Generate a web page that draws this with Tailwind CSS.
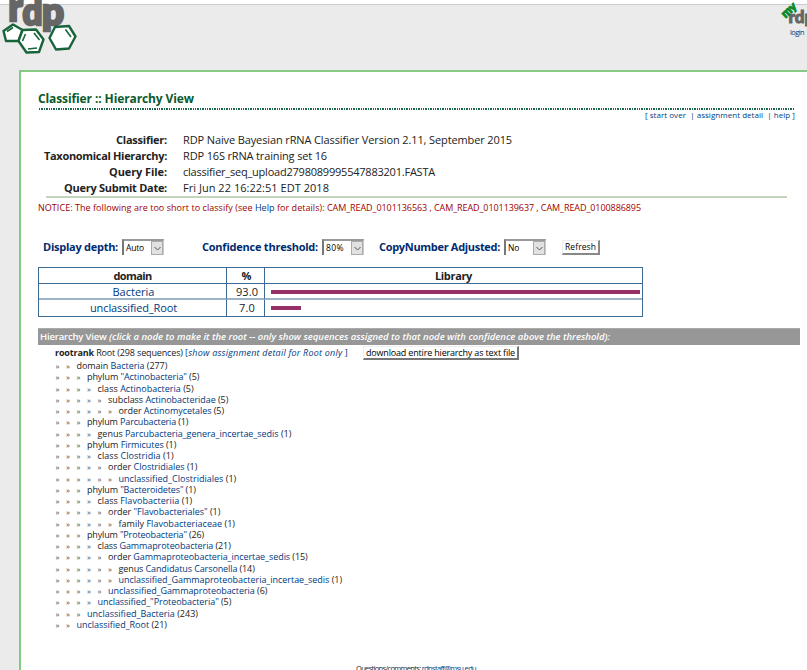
<!DOCTYPE html>
<html lang="en">
<head>
<meta charset="utf-8">
<title>Classifier :: Hierarchy View</title>
<script src="https://cdn.jsdelivr.net/npm/@tailwindcss/browser@4"></script>
</head>
<body class="w-[807px] h-[670px] overflow-hidden bg-[#ebebeb] font-['Open_Sans','Noto_Sans',sans-serif] text-[#222]">
<header class="relative h-[70px] border-t-4 border-white">
  <div class="h-px bg-[#ccc]"></div>
  <svg class="absolute left-0 -top-1" width="110" height="66" viewBox="0 0 110 66">
    <g fill="#666" stroke="#666" stroke-width="2.6" font-family="Lato" font-weight="900" font-size="37">
      <text x="8.5" y="21">r</text>
      <text x="22.5" y="24.500" textLength="20" lengthAdjust="spacingAndGlyphs">d</text>
      <text x="42" y="24.500" textLength="22" lengthAdjust="spacingAndGlyphs">p</text>
    </g>
    <g fill="#fff" stroke="#17643a" stroke-width="2.4" stroke-linejoin="round">
      <path d="M3.500 31 13 24.500 22.500 30 18.500 41 6 41z"/>
      <path d="M22.500 30 36 29.500 43.500 39.500 39 52 26.500 52.500 18.500 41z"/>
      <path d="M55 27 69 26 75.500 36.500 69 48.500 56 49.500 49.500 38z"/>
      <path fill="none" stroke-width="1.6" d="M7 31.500 13 27.500M25.500 34 22.500 41M34 33 39.500 40M28 49 37 48M65.500 29.500 71 37"/>
    </g>
  </svg>
  <svg class="absolute left-[775px] -top-1" width="32" height="40" viewBox="0 0 32 40">
    <text x="13.5" y="23" font-family="Lato" font-weight="900" font-size="17" fill="#666" stroke="#666">rdp</text>
    <text transform="translate(10.500 18.500) rotate(-43)" font-family="Lato" font-weight="900" font-size="12" fill="#0b8a2c" stroke="#0b8a2c" stroke-width="1">my</text>
  </svg>
  <a class="absolute left-[790px] top-[22px] text-[7.500px] leading-[12px] text-[#003a80] whitespace-nowrap" data-w="14">login</a>
</header>
<main class="ml-[19px] h-[600px] border-l-2 border-t-2 border-[#84ca84] bg-white pl-[17px] flow-root whitespace-nowrap">
  <h1 class="mt-[18px] h-[18px] leading-[18px] text-[12px] font-bold text-[#0a5a2c]"><span data-w="156">Classifier :: Hierarchy View</span></h1>
  <div class="h-[2px] ml-px w-[756px] bg-[repeating-linear-gradient(90deg,#1c6b46_0,#1c6b46_1.3px,#fff_1.3px,#fff_2.4px)]"></div>
  <nav class="h-[12px] leading-[10px] w-[757px] text-right text-[8px] text-[#004080] font-medium"><span data-w="150" class="whitespace-pre">[ start over  | assignment detail  | help ]</span></nav>
  <dl class="mt-[10px] grid grid-cols-[129px_1fr] gap-x-4 auto-rows-[16px] leading-[16px] text-[11px]">
    <dt class="text-right font-bold"><span data-w="51">Classifier:</span></dt><dd><span data-w="329">RDP Naive Bayesian rRNA Classifier Version 2.11, September 2015</span></dd>
    <dt class="text-right font-bold"><span data-w="123">Taxonomical Hierarchy:</span></dt><dd><span data-w="144">RDP 16S rRNA training set 16</span></dd>
    <dt class="text-right font-bold"><span data-w="58">Query File:</span></dt><dd><span data-w="252">classifier_seq_upload2798089995547883201.FASTA</span></dd>
    <dt class="text-right font-bold"><span data-w="103">Query Submit Date:</span></dt><dd><span data-w="146">Fri Jun 22 16:22:51 EDT 2018</span></dd>
  </dl>
  <hr class="border-0 h-[2px] bg-[#c3d3bc] ml-2 w-[741px]">
  <p class="mt-[3px] h-[14px] leading-[14px] text-[9px] text-[#a00000]"><span data-w="289">NOTICE: The following are too short to classify (see <a class="text-[#003a80]">Help</a> for details): </span><span data-w="314">CAM_READ_0101136563 , CAM_READ_0101139637 , CAM_READ_0100886895</span></p>
  <form class="mt-[24px] h-[16px] flex items-center text-[11px] leading-[16px] font-bold text-[#002a70] pl-[5px]">
    <div class="w-[79px]"><span data-w="75">Display depth:</span></div>
    <div class="w-[42px] h-[16px] mr-[38px] border-t-2 border-l-2 border-t-[#999] border-l-[#777] border-r border-r-[#ccc] flex items-center text-[8.500px] font-normal text-black pl-[2px]"><span data-w="18">Auto</span><i class="ml-auto w-3 h-full bg-[#e1e1e1] border border-[#aaa] flex items-center justify-center"><svg width="7" height="5" viewBox="0 0 7 5"><path d="M.5 1 3.500 4 6.500 1" fill="none" stroke="#555"/></svg></i></div>
    <div class="w-[120px]"><span data-w="116">Confidence threshold:</span></div>
    <div class="w-[42px] h-[16px] mr-[15px] border-t-2 border-l-2 border-t-[#999] border-l-[#777] border-r border-r-[#ccc] flex items-center text-[8.500px] font-normal text-black pl-[2px]"><span data-w="18">80%</span><i class="ml-auto w-3 h-full bg-[#e1e1e1] border border-[#aaa] flex items-center justify-center"><svg width="7" height="5" viewBox="0 0 7 5"><path d="M.5 1 3.500 4 6.500 1" fill="none" stroke="#555"/></svg></i></div>
    <div class="w-[125px]"><span data-w="121">CopyNumber Adjusted:</span></div>
    <div class="w-[42px] h-[16px] mr-[16px] border-t-2 border-l-2 border-t-[#999] border-l-[#777] border-r border-r-[#ccc] flex items-center text-[8.500px] font-normal text-black pl-[2px]"><span data-w="11">No</span><i class="ml-auto w-3 h-full bg-[#e1e1e1] border border-[#aaa] flex items-center justify-center"><svg width="7" height="5" viewBox="0 0 7 5"><path d="M.5 1 3.500 4 6.500 1" fill="none" stroke="#555"/></svg></i></div>
    <button type="button" class="w-[38px] h-[15px] mt-[1px] border border-t-[#eee] border-l-[#eee] border-b-2 border-r-2 border-b-[#888] border-r-[#888] bg-white text-[8.500px] leading-[12px] font-normal text-black"><span data-w="31">Refresh</span></button>
  </form>
  <div class="mt-[12px] w-[605px] h-[50px] grid grid-cols-[188px_38px_1fr] grid-rows-[16px_16px_16px] border border-[#3d6a94] text-[11px] leading-[16px] text-center">
    <div class="font-bold border-b border-r border-[#3d6a94]"><span data-w="38">domain</span></div><div class="font-bold border-b border-r border-[#3d6a94]"><span data-w="8">%</span></div><div class="font-bold border-b border-[#3d6a94]"><span data-w="37">Library</span></div>
    <div class="pl-[2px] border-b-2 border-r border-b-[#9bb2c8] border-r-[#3d6a94] text-[#003a80]"><span data-w="42">Bacteria</span></div><div class="pl-[3px] border-b-2 border-r border-b-[#9bb2c8] border-r-[#3d6a94]"><span data-w="22">93.0</span></div><div class="border-b-2 border-[#9bb2c8] flex items-center pl-[6px] pt-px"><div class="h-1 w-[369px] bg-[#962f65]"></div></div>
    <div class="pl-[2px] border-r border-[#3d6a94] text-[#003a80]"><span data-w="87">unclassified_Root</span></div><div class="pl-[3px] border-r border-[#3d6a94]"><span data-w="16">7.0</span></div><div class="flex items-center pl-[6px]"><div class="h-1 w-[30px] bg-[#962f65]"></div></div>
  </div>
  <h2 class="mt-[11px] w-[762px] h-[17px] border-t border-[#aaa] bg-[#979797] pl-[2px] leading-[16px] text-[9.500px] font-semibold text-white"><span data-w="69">Hierarchy View </span><i data-w="501">(click a node to make it the root -- only show sequences assigned to that node with confidence above the threshold):</i></h2>
  <div class="mt-[1px] h-[14px] pl-[17px] flex items-center text-[9px] leading-[14px]">
    <span class="w-[308px]"><span data-w="130"><b>rootrank</b> Root (298 sequences) </span><span data-w="163" class="text-[#003a80]">[<i>show assignment detail for Root only</i> ]</span></span>
    <button type="button" class="w-[156px] h-[14px] border border-t-[#eee] border-l-[#eee] border-b-2 border-r-2 border-b-[#777] border-r-[#777] text-[9px] leading-[11px] text-black"><span data-w="149">download entire hierarchy as text file</span></button>
  </div>
  <div id="tree" class="pl-[17.500px] text-[9px] leading-[11.260px]"></div>
  <footer class="mt-[32px] pl-[318px] text-[7.500px] leading-[12px]"><span data-w="120">Questions/comments: <a class="text-[#003a80]">rdpstaff@msu.edu</a></span></footer>
</main>
<script>
// depth, rank, name, count, right edge
const nodes = [
[2,'domain','Bacteria',277,167.3],[3,'phylum','"Actinobacteria"',5,199.3],[4,'class','Actinobacteria',5,193.7],
[5,'subclass','Actinobacteridae',5,228.3],[6,'order','Actinomycetales',5,224],[3,'phylum','Parcubacteria',1,188.3],
[4,'genus','Parcubacteria_genera_incertae_sedis',1,291.3],[3,'phylum','Firmicutes',1,176.3],[4,'class','Clostridia',1,173.7],
[5,'order','Clostridiales',1,197.3],[6,'','unclassified_Clostridiales',1,236.3],[3,'phylum','"Bacteroidetes"',1,195.7],
[4,'class','Flavobacteriia',1,192.3],[5,'order','"Flavobacteriales"',1,220.3],[6,'family','Flavobacteriaceae',1,235],
[3,'phylum','"Proteobacteria"',26,204],[4,'class','Gammaproteobacteria',21,230.7],[5,'order','Gammaproteobacteria_incertae_sedis',15,307.7],
[6,'genus','Candidatus Carsonella',14,254.7],[6,'','unclassified_Gammaproteobacteria_incertae_sedis',1,342],
[5,'','unclassified_Gammaproteobacteria',6,267.3],[4,'','unclassified_"Proteobacteria"',5,231.3],[3,'','unclassified_Bacteria',243,198],[2,'','unclassified_Root',21,167]];
document.getElementById('tree').innerHTML = nodes.map(([d,r,n,c,e]) =>
  '<div class="flex h-[11.260px]">' + '<span class="w-[10.500px] shrink-0 text-[8px] text-[#444]">»</span>'.repeat(d) +
  `<span data-w="${e-55.5-d*10.5}">${r?r+' ':''}<a class="text-[#003a80]">${n}</a> (${c})</span></div>`).join('');
function fit() {
  document.querySelectorAll('[data-w]').forEach(el => {
    el.style.letterSpacing = '0px';
    const w = el.getBoundingClientRect().width;
    el.style.letterSpacing = (el.dataset.w - w) / el.textContent.length + 'px';
  });
}
fit();
addEventListener('load', fit);
document.fonts.ready.then(fit);
new ResizeObserver(fit).observe(document.querySelector('main'));
</script>
</body>
</html>
